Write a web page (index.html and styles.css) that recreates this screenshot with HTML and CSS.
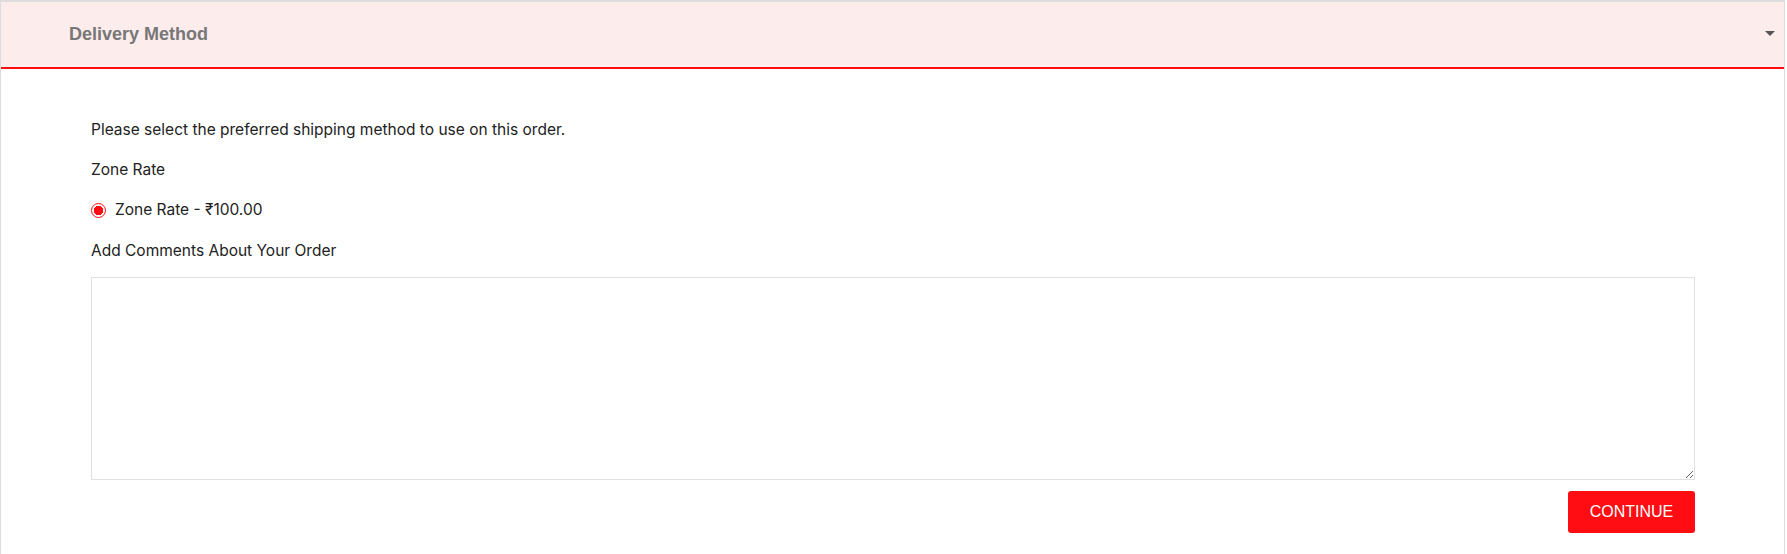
FILE: index.html
```html
<!DOCTYPE html>
<html lang="en">
<head>
    <meta charset="UTF-8">
    <meta name="viewport" content="width=device-width, initial-scale=1.0">
    <title>Checkout - Delivery Method</title>
    <link rel="stylesheet" href="styles.css">
</head>
<body>
    <div class="panel">
        <div class="panel-heading">
            <h4 class="panel-title">Delivery Method</h4>
            <span class="caret"></span>
        </div>
        <div class="panel-body">
            <p>Please select the preferred shipping method to use on this order.</p>
            <p class="group-title">Zone Rate</p>
            <label class="radio">
                <input type="radio" name="shipping_method" value="weight.weight_5" checked>
                <span>Zone Rate - &#8377;100.00</span>
            </label>
            <p class="comment-label">Add Comments About Your Order</p>
            <textarea name="comment" class="form-control"></textarea>
            <div class="buttons">
                <button type="button" class="btn-continue">CONTINUE</button>
            </div>
        </div>
    </div>
</body>
</html>
```

FILE: styles.css
```css
body {
    margin: 0;
    background-color: #fff;
    font-family: 'Inter', 'Open Sans', sans-serif;
    font-size: 15.5px;
    color: #222;
}

.panel {
    margin-right: 2px;
    border: 1px solid #ddd;
    border-top: 2px solid #ddd;
    border-bottom: 0;
    min-height: 552px;
}

.panel-heading {
    display: flex;
    align-items: center;
    justify-content: space-between;
    height: 65px;
    padding: 0 9px 0 68px;
    background-color: #fdecec;
    border-bottom: 2px solid #ff0d12;
}

.panel-title {
    margin: 0;
    font-family: 'Liberation Sans', Arial, sans-serif;
    font-size: 18px;
    font-weight: bold;
    color: #777;
}

.caret {
    width: 0;
    height: 0;
    margin-top: -2px;
    border-left: 5px solid transparent;
    border-right: 5px solid transparent;
    border-top: 5px solid #555;
}

.panel-body {
    display: flex;
    flex-direction: column;
    padding: 50px 89px 20px 90px;
}

.panel-body p {
    margin: 0 0 18px;
    line-height: 22px;
}

.radio {
    display: flex;
    align-items: center;
    gap: 9px;
    margin-bottom: 19px;
    line-height: 22px;
}

.radio input {
    appearance: none;
    flex: none;
    box-sizing: border-box;
    width: 15px;
    height: 15px;
    margin: 0;
    border-radius: 50%;
    border: 1.5px solid #ff0d12;
    background: radial-gradient(circle, #ff0d12 0 4.5px, #fff 5px);
}

.panel-body .comment-label {
    margin-bottom: 15px;
}

.form-control {
    height: 203px;
    margin: 0;
    padding: 6px 12px;
    border: 1px solid #e0e0e0;
    box-sizing: border-box;
    font-family: inherit;
    font-size: 15px;
    resize: vertical;
}

.buttons {
    display: flex;
    justify-content: flex-end;
    margin-top: 11px;
}

.btn-continue {
    width: 127px;
    height: 42px;
    border: 0;
    border-radius: 3px;
    background-color: #ff0d12;
    color: #fff;
    font-family: 'Liberation Sans', Arial, sans-serif;
    font-size: 16px;
    cursor: pointer;
}
```
